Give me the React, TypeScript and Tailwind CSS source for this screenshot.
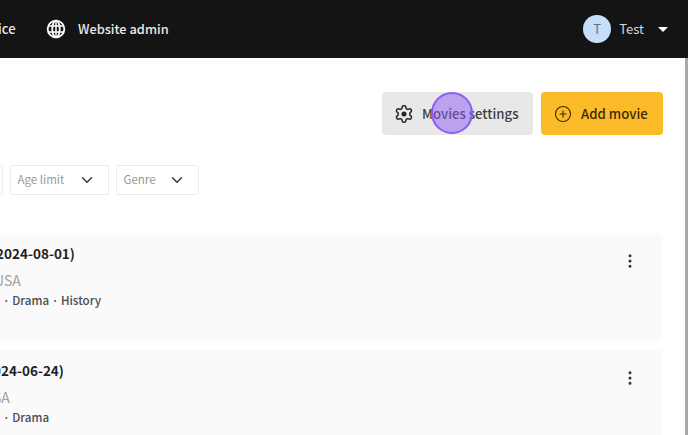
import { ChevronDown, EllipsisVertical, CirclePlus } from 'lucide-react';

const font = "font-['Noto_Sans_CJK_KR','Noto_Sans',sans-serif]";

function GlobeIcon() {
    return (
        <svg width="20" height="20" viewBox="0 0 24 24" fill="none" stroke="currentColor" strokeWidth="2.2" className="ml-[30px]">
            <circle cx="12" cy="12" r="10" />
            <ellipse cx="12" cy="12" rx="4.5" ry="10" />
            <path d="M12 2v20M2.8 8.5h18.4M2.8 15.5h18.4" strokeWidth="1.8" />
        </svg>
    );
}

function GearIcon() {
    return (
        <svg width="20" height="20" viewBox="0 0 24 24" fill="none" stroke="currentColor" strokeWidth="1.8" strokeLinejoin="round" className="text-[#222222]">
            <path d="M12.22 2h-.44a2 2 0 0 0-2 2v.18a2 2 0 0 1-1 1.73l-.43.25a2 2 0 0 1-2 0l-.15-.08a2 2 0 0 0-2.73.73l-.22.38a2 2 0 0 0 .73 2.73l.15.1a2 2 0 0 1 1 1.72v.51a2 2 0 0 1-1 1.74l-.15.09a2 2 0 0 0-.73 2.73l.22.38a2 2 0 0 0 2.73.73l.15-.08a2 2 0 0 1 2 0l.43.25a2 2 0 0 1 1 1.73V20a2 2 0 0 0 2 2h.44a2 2 0 0 0 2-2v-.18a2 2 0 0 1 1-1.73l.43-.25a2 2 0 0 1 2 0l.15.08a2 2 0 0 0 2.73-.73l.22-.39a2 2 0 0 0-.73-2.73l-.15-.08a2 2 0 0 1-1-1.74v-.5a2 2 0 0 1 1-1.74l.15-.09a2 2 0 0 0 .73-2.73l-.22-.38a2 2 0 0 0-2.73-.73l-.15.08a2 2 0 0 1-2 0l-.43-.25a2 2 0 0 1-1-1.73V4a2 2 0 0 0-2-2z" />
            <circle cx="12" cy="12" r="3" fill="currentColor" stroke="none" />
        </svg>
    );
}

function Filter({ label, width }: { label: string; width: string }) {
    return (
        <div className={`flex h-[30px] items-center justify-between rounded-[2px] border border-[#ebebeb] bg-white pl-[6.5px] pr-[12px] text-[11.5px] text-[#999999] ${width}`}>
            <span>{label}</span>
            <ChevronDown size={18} strokeWidth={2} className="text-[#3a3a3a]" />
        </div>
    );
}

type Movie = { title: string; titleClass: string; country: string; countryClass: string; genres: string };

function MovieCard({ title, titleClass, country, countryClass, genres }: Movie) {
    return (
        <div className="flex h-[108px] w-[900px] justify-between rounded-[6px] bg-[#fafafa] pr-[24px] pt-[11px]">
            <div className="flex flex-col">
                <div className={`text-[13.5px] font-bold leading-[18px] whitespace-nowrap text-[#1f1f1f] ${titleClass}`}>{title}</div>
                <div className={`mt-[9px] text-[14px] leading-[18px] whitespace-nowrap text-[#a0a0a0] ${countryClass}`}>{country}</div>
                <div className="ml-[240px] mt-[2px] text-[11.6px] font-medium leading-[18px] whitespace-nowrap text-[#4a4a4a]">{genres}</div>
            </div>
            <EllipsisVertical size={18} strokeWidth={2} className="mt-[8px] text-[#333333]" />
        </div>
    );
}

export default function App() {
    return (
        <div className={`relative h-[435px] w-[688px] overflow-hidden bg-white ${font}`}>
            <header className="flex h-[58px] items-center justify-between bg-[#141414] pr-[20px] text-white">
                <div className="flex items-center">
                    <span className="ml-[-2px] w-[18px] whitespace-nowrap text-[13px] font-medium text-[#e8e8e8]">ice</span>
                    <GlobeIcon />
                    <span className="ml-[12px] text-[12.8px] font-medium text-[#e8e8e8]">Website admin</span>
                </div>
                <div className="flex items-center">
                    <div className="flex h-[28px] w-[28px] items-center justify-center rounded-full bg-[#c5dff8] text-[13px] text-[#5b7288]">T</div>
                    <span className="ml-[8px] text-[13px] text-[#d6d6d6]">Test</span>
                    <div className="ml-[14px] h-0 w-0 border-x-[5px] border-t-[5px] border-x-transparent border-t-white" />
                </div>
            </header>

            <main className="ml-[-237px] w-[925px] pr-[25px]">
                <div className="flex justify-end gap-[8px] pt-[34px]">
                    <button className="flex h-[43px] w-[151px] items-center rounded-[4px] bg-[#e8e8e8] pl-[12px] text-[13.2px] font-medium text-[#3d3d3d]">
                        <GearIcon />
                        <span className="ml-[8px] mt-[1px]">Movies settings</span>
                    </button>
                    <button className="flex h-[43px] w-[122px] items-center rounded-[4px] bg-[#fbbb28] pl-[13px] text-[13.2px] font-medium text-[#3d2a00]">
                        <CirclePlus size={18} strokeWidth={1.5} />
                        <span className="ml-[9px] mt-[1px]">Add movie</span>
                    </button>
                </div>
                <div className="mt-[30px] flex gap-[7px] pl-[137px]">
                    <div className="h-[30px] w-[103px] rounded-[2px] border border-[#ebebeb]" />
                    <Filter label="Age limit" width="w-[99px]" />
                    <Filter label="Genre" width="w-[83px]" />
                </div>
                <div className="mt-[38px] flex flex-col items-end gap-[9px]">
                    <MovieCard title="(2024-08-01)" titleClass="ml-[228px]" country="USA" countryClass="ml-[231px]" genres="· Drama · History" />
                    <MovieCard title="(2024-06-24)" titleClass="ml-[217px]" country="USA" countryClass="ml-[220px]" genres="· Drama" />
                </div>
            </main>

            <div className="absolute right-0 top-[58px] h-[377px] w-[3px] bg-[#a8a8a8]" />
            <div className="absolute left-[431px] top-[92px] h-[42px] w-[42px] rounded-full border-2 border-[#8b5cf6] bg-[#8b5cf6]/50" />
        </div>
    );
}
